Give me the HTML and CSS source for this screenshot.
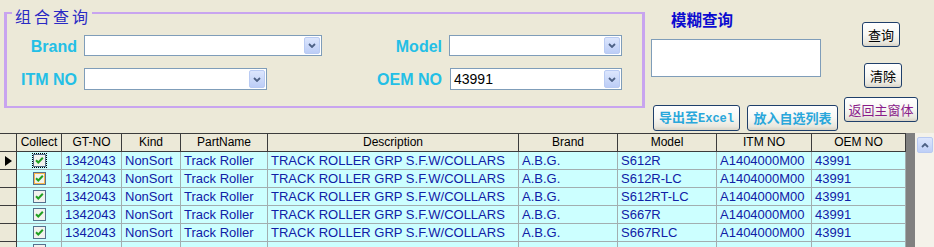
FILE: index.html
```html
<!DOCTYPE html>
<html>
<head>
<meta charset="utf-8">
<title>组合查询</title>
<link rel="stylesheet" href="styles.css">
</head>
<body>
<div class="top">
  <div class="group">
    <span class="group-title">组合查询</span>
    <div class="form">
      <label class="lbl">Brand</label>
      <div class="combo c-brand"><span class="val"></span><span class="ddbtn"><svg width="8" height="5" viewBox="0 0 8 5"><path d="M1 1 L4 4 L7 1" stroke="#4D6185" stroke-width="1.8" fill="none"/></svg></span></div>
      <label class="lbl">Model</label>
      <div class="combo c-model"><span class="val"></span><span class="ddbtn"><svg width="8" height="5" viewBox="0 0 8 5"><path d="M1 1 L4 4 L7 1" stroke="#4D6185" stroke-width="1.8" fill="none"/></svg></span></div>
      <label class="lbl">ITM NO</label>
      <div class="combo c-itm"><span class="val"></span><span class="ddbtn"><svg width="8" height="5" viewBox="0 0 8 5"><path d="M1 1 L4 4 L7 1" stroke="#4D6185" stroke-width="1.8" fill="none"/></svg></span></div>
      <label class="lbl">OEM NO</label>
      <div class="combo c-oem"><span class="val">43991</span><span class="ddbtn"><svg width="8" height="5" viewBox="0 0 8 5"><path d="M1 1 L4 4 L7 1" stroke="#4D6185" stroke-width="1.8" fill="none"/></svg></span></div>
    </div>
  </div>
  <div class="panel">
    <div class="fuzzy">
      <div class="fuzzy-title">模糊查询</div>
      <div class="textbox"></div>
      <div class="btnrow">
        <button class="btn btn-export">导出至<span class="mono">Excel</span></button>
        <button class="btn btn-fav">放入自选列表</button>
      </div>
    </div>
    <div class="actions">
      <button class="btn btn-q">查询</button>
      <button class="btn btn-c">清除</button>
      <button class="btn btn-back">返回主窗体</button>
    </div>
  </div>
</div>
<div class="gridwrap">
  <div class="grid">
    <div class="hc rh"></div>
    <div class="hc">Collect</div>
    <div class="hc">GT-NO</div>
    <div class="hc">Kind</div>
    <div class="hc">PartName</div>
    <div class="hc">Description</div>
    <div class="hc">Brand</div>
    <div class="hc">Model</div>
    <div class="hc">ITM NO</div>
    <div class="hc">OEM NO</div>

    <div class="rh"><svg width="7" height="10" viewBox="0 0 7 10"><polygon points="0,0 7,5 0,10" fill="#000"/></svg></div>
    <div class="dc cbc"><span class="focus"><svg width="13" height="13" viewBox="0 0 13 13"><rect x="0.5" y="0.5" width="12" height="12" fill="#F2F2EE" stroke="#55718E"/><path d="M3 6.2 L5.3 8.5 L9.8 3.8" fill="none" stroke="#21A121" stroke-width="2"/></svg></span></div>
    <div class="dc">1342043</div><div class="dc">NonSort</div><div class="dc">Track Roller</div><div class="dc">TRACK ROLLER GRP S.F.W/COLLARS</div><div class="dc">A.B.G.</div><div class="dc">S612R</div><div class="dc">A1404000M00</div><div class="dc">43991</div>

    <div class="rh"></div>
    <div class="dc cbc"><svg width="13" height="13" viewBox="0 0 13 13"><rect x="0.5" y="0.5" width="12" height="12" fill="#F2F2EE" stroke="#55718E"/><rect x="1.5" y="1.5" width="10" height="10" fill="none" stroke="#F8B54A"/><path d="M3 6.2 L5.3 8.5 L9.8 3.8" fill="none" stroke="#21A121" stroke-width="2"/></svg></div>
    <div class="dc">1342043</div><div class="dc">NonSort</div><div class="dc">Track Roller</div><div class="dc">TRACK ROLLER GRP S.F.W/COLLARS</div><div class="dc">A.B.G.</div><div class="dc">S612R-LC</div><div class="dc">A1404000M00</div><div class="dc">43991</div>

    <div class="rh"></div>
    <div class="dc cbc"><svg width="13" height="13" viewBox="0 0 13 13"><rect x="0.5" y="0.5" width="12" height="12" fill="#F2F2EE" stroke="#55718E"/><path d="M3 6.2 L5.3 8.5 L9.8 3.8" fill="none" stroke="#21A121" stroke-width="2"/></svg></div>
    <div class="dc">1342043</div><div class="dc">NonSort</div><div class="dc">Track Roller</div><div class="dc">TRACK ROLLER GRP S.F.W/COLLARS</div><div class="dc">A.B.G.</div><div class="dc">S612RT-LC</div><div class="dc">A1404000M00</div><div class="dc">43991</div>

    <div class="rh"></div>
    <div class="dc cbc"><svg width="13" height="13" viewBox="0 0 13 13"><rect x="0.5" y="0.5" width="12" height="12" fill="#F2F2EE" stroke="#55718E"/><path d="M3 6.2 L5.3 8.5 L9.8 3.8" fill="none" stroke="#21A121" stroke-width="2"/></svg></div>
    <div class="dc">1342043</div><div class="dc">NonSort</div><div class="dc">Track Roller</div><div class="dc">TRACK ROLLER GRP S.F.W/COLLARS</div><div class="dc">A.B.G.</div><div class="dc">S667R</div><div class="dc">A1404000M00</div><div class="dc">43991</div>

    <div class="rh"></div>
    <div class="dc cbc"><svg width="13" height="13" viewBox="0 0 13 13"><rect x="0.5" y="0.5" width="12" height="12" fill="#F2F2EE" stroke="#55718E"/><path d="M3 6.2 L5.3 8.5 L9.8 3.8" fill="none" stroke="#21A121" stroke-width="2"/></svg></div>
    <div class="dc">1342043</div><div class="dc">NonSort</div><div class="dc">Track Roller</div><div class="dc">TRACK ROLLER GRP S.F.W/COLLARS</div><div class="dc">A.B.G.</div><div class="dc">S667RLC</div><div class="dc">A1404000M00</div><div class="dc">43991</div>

    <div class="rh"></div>
    <div class="dc cbc"><svg width="13" height="13" viewBox="0 0 13 13"><rect x="0.5" y="0.5" width="12" height="12" fill="#F2F2EE" stroke="#55718E"/></svg></div>
    <div class="dc"></div><div class="dc"></div><div class="dc"></div><div class="dc"></div><div class="dc"></div><div class="dc"></div><div class="dc"></div><div class="dc"></div>
  </div>
  <div class="gridbg"></div>
  <div class="vscroll">
    <div class="up"><svg width="8" height="5" viewBox="0 0 8 5"><path d="M1 4 L4 1 L7 4" stroke="#4D6185" stroke-width="1.8" fill="none"/></svg></div>
  </div>
</div>
</body>
</html>
```

FILE: styles.css
```css
html, body {
  margin: 0;
  padding: 0;
}
body {
  width: 934px;
  height: 247px;
  overflow: hidden;
  background: #ECE9D8;
  font-family: "Liberation Sans", Arial, sans-serif;
}

/* ---------- top area ---------- */
.top {
  display: flex;
  height: 133px;
  overflow: hidden;
}
.group {
  position: relative;
  box-sizing: border-box;
  margin: 12px 0 0 4px;
  width: 641px;
  height: 96px;
  border-style: solid;
  border-color: #C8A4EF;
  border-width: 2px 3px 2px 3px;
}
.group-title {
  position: absolute;
  top: -7px;
  left: 5px;
  padding: 0 1px 0 3px;
  background: #ECE9D8;
  color: #2A2AC4;
  font-family: "Noto Sans CJK SC", sans-serif;
  font-size: 16px;
  line-height: 18px;
  letter-spacing: 3px;
}
.form {
  display: grid;
  grid-template-columns: 70px 238px 113px 173px;
  grid-template-rows: 21px 22px;
  column-gap: 7px;
  row-gap: 12px;
  padding-top: 21px;
}
.lbl {
  justify-self: end;
  align-self: center;
  color: #24BFE6;
  font-weight: bold;
  font-size: 16px;
  line-height: 18px;
  padding-top: 2px;
}
.combo {
  box-sizing: border-box;
  display: flex;
  align-items: center;
  justify-content: space-between;
  border: 1px solid #7F9DB9;
  background: #FFFFFF;
  padding: 1px;
}
.c-brand { width: 238px; }
.c-model { width: 173px; }
.c-itm { width: 183px; }
.c-oem { width: 172px; margin-left: 1px; }
.val {
  padding-left: 2px;
  font-size: 14px;
  color: #000;
  line-height: 17px;
}
.ddbtn {
  box-sizing: border-box;
  width: 16px;
  height: 100%;
  display: flex;
  align-items: center;
  justify-content: center;
  border: 1px solid #B9CBF3;
  border-radius: 2px;
  background: linear-gradient(#DCE6FD, #BCCDF6);
}

.panel {
  display: flex;
  margin-left: 6px;
}
.fuzzy {
  display: flex;
  flex-direction: column;
  width: 187px;
}
.fuzzy-title {
  margin-top: 11px;
  padding-left: 20px;
  color: #0B0BD0;
  font-family: "Noto Sans CJK SC", sans-serif;
  font-weight: bold;
  font-size: 15.5px;
  line-height: 16px;
}
.textbox {
  box-sizing: border-box;
  margin-top: 12px;
  width: 170px;
  height: 38px;
  border: 1px solid #7F9DB9;
  background: #FFFFFF;
}
.btnrow {
  display: flex;
  gap: 7px;
  margin-top: 28px;
  padding-left: 2px;
}
.btn {
  box-sizing: border-box;
  height: 25px;
  padding: 0;
  border: 1px solid #1F3F6A;
  border-radius: 3px;
  background: linear-gradient(#FFFFFF 0%, #F7F7F3 50%, #E9E7DE 85%, #D8D3C6 100%);
  font-family: "Noto Sans CJK SC", sans-serif;
  font-size: 13px;
  color: #000;
  line-height: 16px;
}
.btn-export, .btn-fav {
  height: 26px;
  color: #2AA7DB;
  font-weight: bold;
}
.btn-export { width: 87px; }
.btn-fav { width: 91px; }
.mono {
  font-family: "Liberation Mono", monospace;
  font-size: 12px;
  font-weight: bold;
}
.actions {
  display: flex;
  flex-direction: column;
  align-items: center;
  width: 74px;
  margin-left: 6px;
}
.btn-q { width: 38px; margin-top: 22px; }
.btn-c { width: 38px; margin-top: 16px; margin-left: 4px; }
.btn-back { width: 74px; margin-top: 9px; color: #8A1C8A; }

/* ---------- grid ---------- */
.gridwrap {
  display: flex;
  height: 114px;
  overflow: hidden;
}
.grid {
  width: 906px;
  display: grid;
  grid-template-columns: 17px 45px 60px 59px 87px 251px 99px 99px 95px 94px;
  grid-template-rows: 19px;
  grid-auto-rows: 18px;
  align-content: start;
  background: #ECE9D8;
}
.hc {
  box-sizing: border-box;
  border-top: 1px solid #3C3C3C;
  border-bottom: 1px solid #3C3C3C;
  border-right: 1px solid #3C3C3C;
  background: #ECE9D8;
  font-size: 12px;
  line-height: 17px;
  text-align: center;
  color: #000;
  white-space: nowrap;
  overflow: hidden;
}
.rh {
  box-sizing: border-box;
  border-right: 1px solid #3C3C3C;
  border-bottom: 1px solid #3C3C3C;
  background: #ECE9D8;
  display: flex;
  align-items: center;
  padding-left: 5px;
}
.dc {
  box-sizing: border-box;
  border-right: 1px solid #A2AEB0;
  border-bottom: 1px solid #A2AEB0;
  background: #CCFFFF;
  padding-left: 3px;
  font-size: 13px;
  line-height: 17px;
  color: #1020A6;
  white-space: nowrap;
  overflow: hidden;
}
.cbc {
  display: flex;
  align-items: center;
  justify-content: center;
  padding-left: 0;
}
.cbc svg { display: block; }
.focus {
  display: block;
  padding: 1px;
  outline: 1px dotted #000;
  outline-offset: -1px;
}
.gridbg {
  width: 9px;
  background: #808080;
}
.vscroll {
  width: 19px;
  background: #F4F2EA;
  padding: 4px 0 0 2px;
  box-sizing: border-box;
}
.up {
  box-sizing: border-box;
  width: 16px;
  height: 16px;
  display: flex;
  align-items: center;
  justify-content: center;
  border: 1px solid #B8C9F2;
  border-radius: 2px;
  background: linear-gradient(#DCE6FD, #BECFF7);
}
```
